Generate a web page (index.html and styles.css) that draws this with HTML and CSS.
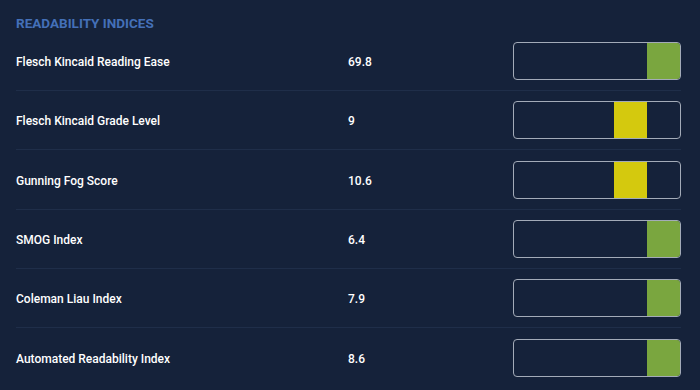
FILE: index.html
```html
<!DOCTYPE html>
<html>
<head>
<meta charset="utf-8">
<link rel="stylesheet" href="styles.css">
</head>
<body>
<div class="panel">
  <h2 class="title">READABILITY INDICES</h2>
  <div class="list">
    <div class="row">
      <span class="label">Flesch Kincaid Reading Ease</span>
      <span class="value">69.8</span>
      <div class="meter"><span class="seg"></span><span class="seg"></span><span class="seg"></span><span class="seg"></span><span class="seg green"></span></div>
    </div>
    <div class="row">
      <span class="label">Flesch Kincaid Grade Level</span>
      <span class="value">9</span>
      <div class="meter"><span class="seg"></span><span class="seg"></span><span class="seg"></span><span class="seg yellow"></span><span class="seg"></span></div>
    </div>
    <div class="row">
      <span class="label">Gunning Fog Score</span>
      <span class="value">10.6</span>
      <div class="meter"><span class="seg"></span><span class="seg"></span><span class="seg"></span><span class="seg yellow"></span><span class="seg"></span></div>
    </div>
    <div class="row">
      <span class="label">SMOG Index</span>
      <span class="value">6.4</span>
      <div class="meter"><span class="seg"></span><span class="seg"></span><span class="seg"></span><span class="seg"></span><span class="seg green"></span></div>
    </div>
    <div class="row">
      <span class="label">Coleman Liau Index</span>
      <span class="value">7.9</span>
      <div class="meter"><span class="seg"></span><span class="seg"></span><span class="seg"></span><span class="seg"></span><span class="seg green"></span></div>
    </div>
    <div class="row last">
      <span class="label">Automated Readability Index</span>
      <span class="value">8.6</span>
      <div class="meter"><span class="seg"></span><span class="seg"></span><span class="seg"></span><span class="seg"></span><span class="seg green"></span></div>
    </div>
  </div>
</div>
</body>
</html>
```

FILE: styles.css
```css
html, body {
  margin: 0;
  padding: 0;
  background: #15223a;
}
body {
  width: 700px;
  height: 390px;
  overflow: hidden;
  font-family: Roboto, "Liberation Sans", sans-serif;
}
.panel {
  padding: 15px 19px 0 16px;
}
.title {
  margin: 0;
  font-size: 13.5px;
  font-weight: 700;
  color: #4470b8;
  line-height: 16px;
}
.list {
  margin-top: 0.6px;
}
.row {
  display: grid;
  grid-template-columns: 332px 1fr 168px;
  align-items: center;
  padding: 10.2px 0;
  border-bottom: 1px solid #1f2e49;
}
.row.last {
  border-bottom: none;
}
.label, .value {
  font-size: 12px;
  font-weight: 500;
  color: #ffffff;
  padding-top: 2px;
}
.meter {
  display: flex;
  height: 38px;
  box-sizing: border-box;
  border: 1px solid #a3abb8;
  border-radius: 4px;
  overflow: hidden;
}
.seg {
  flex: 1;
}
.seg.green {
  background: #7aa63f;
}
.seg.yellow {
  background: #d4c90e;
}
```
